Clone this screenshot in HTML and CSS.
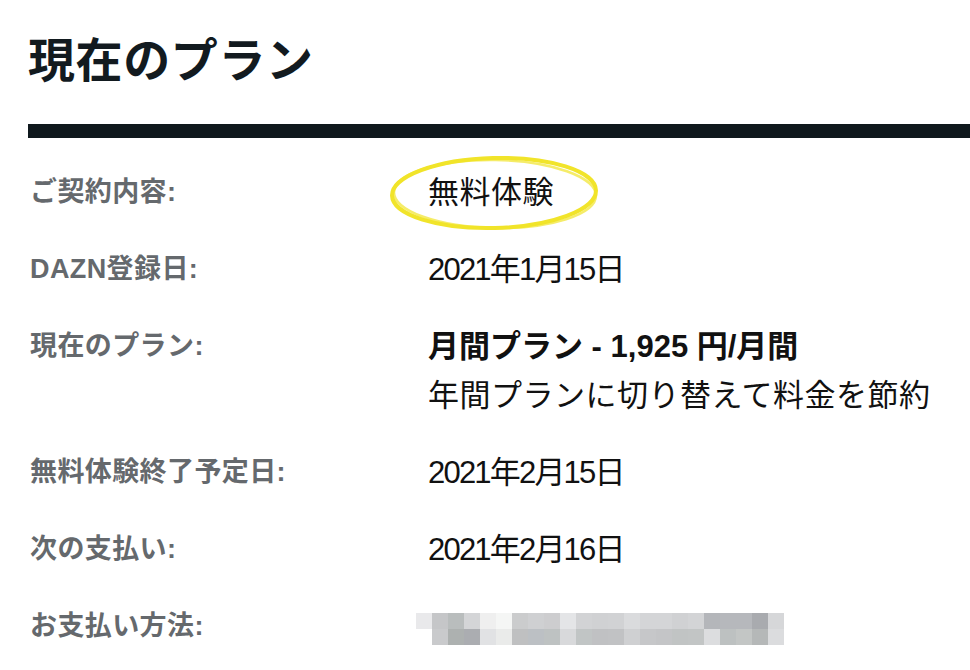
FILE: index.html
```html
<!DOCTYPE html>
<html lang="ja">
<head>
  <meta charset="UTF-8">
  <title>現在のプラン</title>
  <link rel="stylesheet" href="styles.css">
</head>
<body>

  <section class="plan">
    <h1 class="plan-title">現在のプラン</h1>
    <div class="plan-bar"></div>

    <dl class="plan-list">
      <dt>ご契約内容:</dt>
      <dd class="marked">
        無料体験
        <svg class="circle" viewBox="0 0 214 80" aria-hidden="true">
          <ellipse cx="106" cy="39" rx="102" ry="35" transform="rotate(-1.5 106 39)" />
          <ellipse class="circle-2" cx="107" cy="40" rx="101" ry="34" transform="rotate(1 107 40)" />
        </svg>
      </dd>

      <dt>DAZN登録日:</dt>
      <dd class="date">2021年1月15日</dd>

      <dt>現在のプラン:</dt>
      <dd>
        <strong>月間プラン - 1,925 円/月間</strong><br>
        年間プランに切り替えて料金を節約
      </dd>

      <dt>無料体験終了予定日:</dt>
      <dd class="date">2021年2月15日</dd>

      <dt>次の支払い:</dt>
      <dd class="date">2021年2月16日</dd>

      <dt>お支払い方法:</dt>
      <dd><span class="mosaic"><span class="mosaic-row1"></span><span class="mosaic-row2"></span></span></dd>
    </dl>
  </section>

</body>
</html>
```

FILE: styles.css
```css
body {
  margin: 0;
  background-color: #fff;
  font-family: "Liberation Sans", "Noto Sans CJK JP", sans-serif;
  color: #121a1f;
}
.plan {
  padding-left: 28px;
}
.plan-title {
  margin: 27px 0 0;
  font-family: "Noto Sans CJK JP", sans-serif;
  font-size: 47px;
  line-height: 60px;
  font-weight: 700;
  letter-spacing: 0.6px;
}
.plan-bar {
  margin-top: 37px;
  height: 14px;
  background-color: #0f181d;
}
.plan-list {
  display: grid;
  grid-template-columns: 400px 1fr;
  margin: 16px 0 0;
}
.plan-list dt,
.plan-list dd {
  margin: 0;
  padding: 14px 0;
  line-height: 49px;
}
.plan-list dt {
  font-size: 27px;
  font-weight: 700;
  color: #65696d;
  padding-left: 2px;
  letter-spacing: 0.4px;
}
.plan-list dd {
  font-size: 31px;
  color: #111;
  letter-spacing: 0.5px;
}
.plan-list .date {
  letter-spacing: -1.8px;
}
.plan-list strong {
  font-weight: 700;
  letter-spacing: 0;
}
.marked {
  position: relative;
}
.circle {
  position: absolute;
  left: -40px;
  top: 0;
  width: 214px;
  height: 80px;
  fill: none;
  stroke: #f1e42a;
  stroke-width: 4;
}
.circle-2 {
  stroke-width: 2.5;
  opacity: 0.7;
}
.mosaic {
  display: inline-block;
  vertical-align: middle;
  margin-left: -12px;
  width: 368px;
}
.mosaic-row1,
.mosaic-row2 {
  display: block;
  height: 16px;
}
.mosaic-row1 {
  background: linear-gradient(to right,
    #e9e9eb 0 16px, #c5c6c8 16px 32px, #b9bdbd 32px 48px, #d4d5d7 48px 64px,
    #efefef 64px 80px, #f5f6f5 80px 96px, #cbcccd 96px 112px, #cfd0d2 112px 128px,
    #cdcdcf 128px 144px, #e4e5e7 144px 160px, #d2d3d5 160px 176px, #d0d1d3 176px 192px,
    #d1d2d4 192px 208px, #dadbdd 208px 224px, #d4d5d7 224px 240px, #d4d5d7 240px 256px,
    #d0d1d3 256px 272px, #d3d4d6 272px 288px, #b4b6ba 288px 304px, #b6b8bc 304px 320px,
    #b6b8bc 320px 336px, #a9abaf 336px 352px, #d6d7d9 352px 368px);
}
.mosaic-row2 {
  background: linear-gradient(to right,
    #ffffff 0 16px, #c9cacc 16px 32px, #adb1b0 32px 48px, #abadb1 48px 64px,
    #e1e2e4 64px 80px, #eaebea 80px 96px, #bfc0c1 96px 112px, #bcc0c4 112px 128px,
    #bec2c2 128px 144px, #d8d9db 144px 160px, #c1c5c5 160px 176px, #c0c1c3 176px 192px,
    #c1c2c4 192px 208px, #cfd0d2 208px 224px, #c6c7c9 224px 240px, #c4c5c7 240px 256px,
    #c1c4c4 256px 272px, #c2c5c5 272px 288px, #dcdddf 288px 304px, #bdc1c1 304px 320px,
    #c3c6c5 320px 336px, #b5b8b8 336px 352px, #dbdcde 352px 368px);
}
```
